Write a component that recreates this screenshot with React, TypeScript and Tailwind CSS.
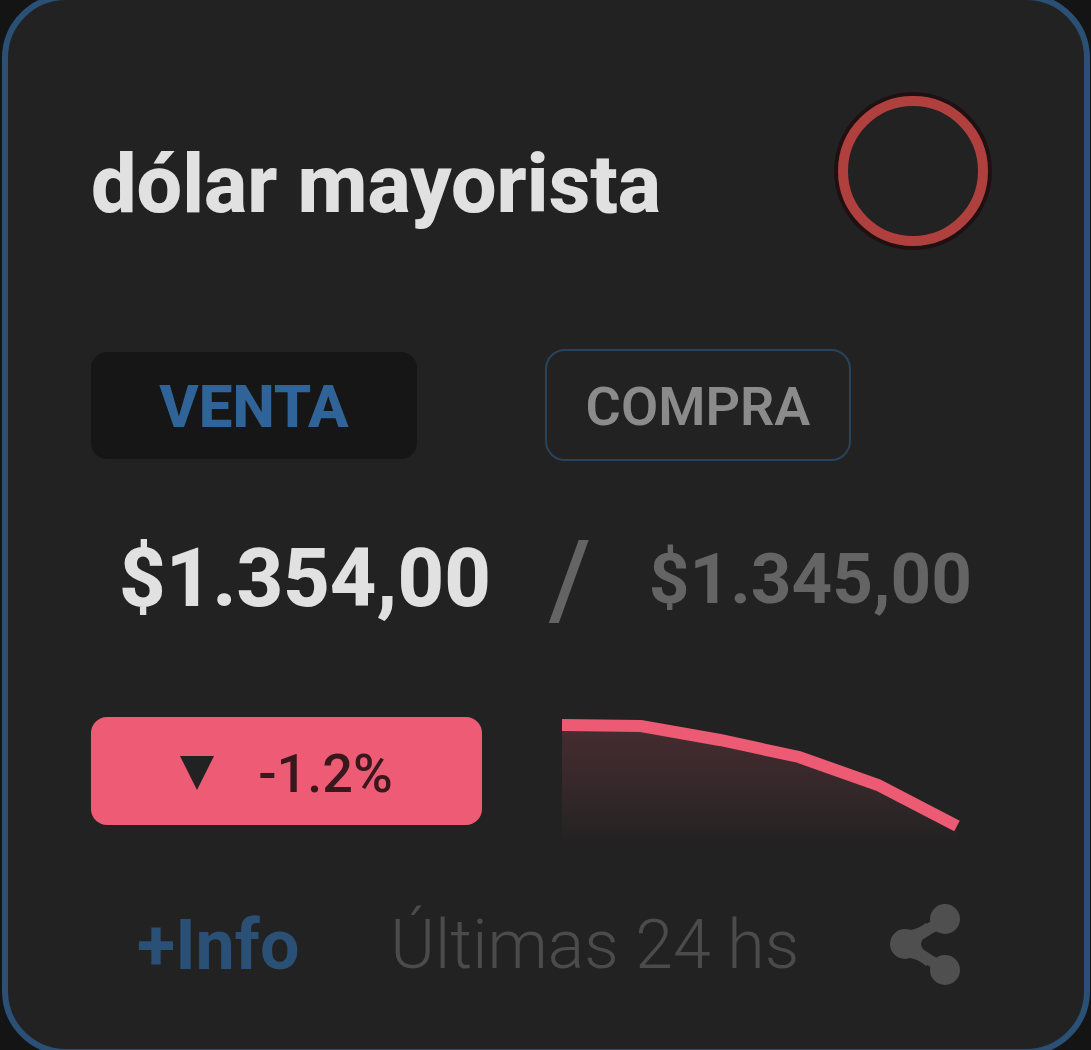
import React from "react";

const values = [725, 726, 740, 757, 785, 826];
const points = values.map((v, i) => `${i * 79},${v - 717}`);

function Sparkline() {
  return (
    <svg viewBox="0 0 400 128" className="h-32 w-[400px] shrink-0" role="img" aria-label="Evolución de las últimas 24 horas">
      <defs>
        <linearGradient id="area" x1="0" y1="0" x2="0" y2="1">
          <stop offset="0" stopColor="#ec5b73" stopOpacity="0.18" />
          <stop offset="0.5" stopColor="#ec5b73" stopOpacity="0.1" />
          <stop offset="1" stopColor="#ec5b73" stopOpacity="0" />
        </linearGradient>
      </defs>
      <polygon points={`0,128 ${points.join(" ")} 395,128`} fill="url(#area)" />
      <polyline points={points.join(" ")} fill="none" stroke="#ec5b73" strokeWidth="12" />
    </svg>
  );
}

function ShareIcon() {
  return (
    <svg viewBox="0 0 70 84" className="h-[84px] w-[70px]" fill="#4f4f4f" stroke="#4f4f4f" aria-hidden="true">
      <path d="M55 16 15 41 55 67" fill="none" strokeWidth="11" />
      <path d="M20 27 Q28 26 36 20 L48 28 Q32 32 31 41 Q32 50 48 55 L36 63 Q28 56 20 55Z" stroke="none" />
      <circle cx="55" cy="16" r="15" stroke="none" />
      <circle cx="15" cy="41" r="15" stroke="none" />
      <circle cx="55" cy="67" r="15" stroke="none" />
    </svg>
  );
}

export default function App() {
  return (
    <main className="min-h-screen overflow-hidden bg-[#141414] pl-0.5 pr-px font-['Roboto',sans-serif]">
      <article className="-my-1.5 rounded-[64px] border-[6px] border-[#2a5075] bg-[#222222] pb-[62px] pl-[83px] pr-24 pt-24">
        <header className="flex items-center justify-between">
          <h1 className="pt-7 text-[81px] font-extrabold leading-[100px] text-[#e1e1e1]">dólar mayorista</h1>
          <span className="size-[150px] shrink-0 rounded-full border-[10px] border-[#b0403e] ring-4 ring-[#211012]" />
        </header>

        <div className="mt-[103px] flex items-center gap-32">
          <button type="button" className="h-[107px] w-[326px] rounded-2xl bg-[#161616] pt-1 text-[60px] font-extrabold leading-[80px] text-[#306499]">
            VENTA
          </button>
          <button type="button" className="h-28 w-[306px] rounded-[20px] border-2 border-[#28435c] pt-1 text-[54px] font-semibold leading-[80px] text-[#8b8b8b]">
            COMPRA
          </button>
        </div>

        <div className="mt-14 flex h-[120px] items-center justify-between pl-7 pr-4 pt-1 font-bold">
          <strong className="text-[81px] font-extrabold leading-[120px] text-[#e1e1e1]">$1.354,00</strong>
          <span className="text-[108px] font-medium leading-[120px] text-[#646464]">/</span>
          <span className="text-[71px] leading-[120px] text-[#646464]">$1.345,00</span>
        </div>

        <div className="mt-20 flex items-start gap-20">
          <div className="flex h-[108px] w-[391px] items-center justify-center gap-11 rounded-2xl bg-[#ed5c74] pt-1 text-[54px] font-medium text-[#38171d]">
            <svg viewBox="0 0 34 34" className="size-[34px]" fill="#222222" aria-hidden="true">
              <path d="M0 0H34L17 34Z" />
            </svg>
            <span>-1.2%</span>
          </div>
          <Sparkline />
        </div>

        <footer className="mt-14 flex items-center justify-between pl-[46px] pr-7 pt-0.5">
          <a href="#info" className="text-[70px] font-bold leading-[84px] text-[#2a5075]">+Info</a>
          <span className="text-[68px] font-light leading-[84px] text-[#4b4b4b]">Últimas 24 hs</span>
          <button type="button" aria-label="Compartir">
            <ShareIcon />
          </button>
        </footer>
      </article>
    </main>
  );
}
